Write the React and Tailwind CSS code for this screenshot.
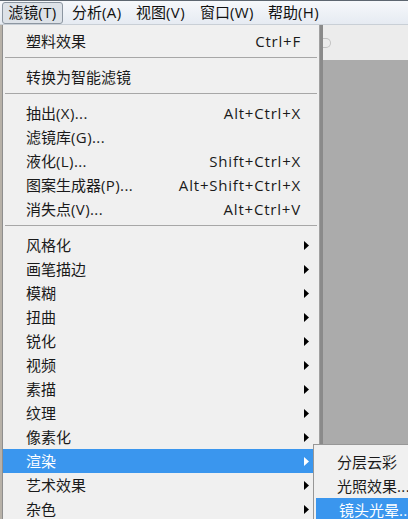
import React from 'react';

const font = { fontFamily: '"Segoe UI", "Open Sans", "Noto Sans CJK SC", sans-serif' };

const topMenus = [
  { label: '分析(A)', w: 'w-[64px]' },
  { label: '视图(V)', w: 'w-[64px]' },
  { label: '窗口(W)', w: 'w-[68px]' },
  { label: '帮助(H)', w: 'w-[64px]' },
];

const groups = [
  [{ label: '塑料效果', shortcut: 'Ctrl+F' }],
  [{ label: '转换为智能滤镜' }],
  [
    { label: '抽出(X)...', shortcut: 'Alt+Ctrl+X' },
    { label: '滤镜库(G)...' },
    { label: '液化(L)...', shortcut: 'Shift+Ctrl+X' },
    { label: '图案生成器(P)...', shortcut: 'Alt+Shift+Ctrl+X' },
    { label: '消失点(V)...', shortcut: 'Alt+Ctrl+V' },
  ],
  [
    { label: '风格化', sub: true },
    { label: '画笔描边', sub: true },
    { label: '模糊', sub: true },
    { label: '扭曲', sub: true },
    { label: '锐化', sub: true },
    { label: '视频', sub: true },
    { label: '素描', sub: true },
    { label: '纹理', sub: true },
    { label: '像素化', sub: true },
    { label: '渲染', sub: true, active: true },
    { label: '艺术效果', sub: true },
    { label: '杂色', sub: true },
  ],
];

// latin bits in the original are a bit wider than our fallback font
const Mixed = ({ text }) =>
  text.split(/([\x20-\x7e]+)/).map((part, i) =>
    /[\x20-\x7e]/.test(part) ? (
      <span key={i} className="tracking-[0.4px]">{part}</span>
    ) : (
      <span key={i}>{part}</span>
    )
  );

const Arrow = ({ color }) => (
  <svg width="5" height="9" viewBox="0 0 5 9" className="block">
    <path d="M0 0 L5 4.5 L0 9 Z" fill={color} />
  </svg>
);

const MenuRow = ({ item }) => (
  <div
    className={`flex items-center h-[24px] pl-[23px] ${
      item.active ? 'bg-[#3a96ee] text-white' : 'text-[#1a1a1a]'
    }`}
  >
    <span className="flex-1 whitespace-nowrap">
      <Mixed text={item.label} />
    </span>
    {item.shortcut && (
      <span className="whitespace-nowrap tracking-[0.8px]">{item.shortcut}</span>
    )}
    <span className="w-[18px] flex items-center pl-[3px]">
      {item.sub && <Arrow color={item.active ? '#ffffff' : '#000000'} />}
    </span>
  </div>
);

const App = () => {
  return (
    <div
      className="relative w-[408px] h-[519px] overflow-hidden bg-[#ababab] text-[15px]"
      style={font}
    >
      {/* menu bar */}
      <div className="h-[25px] flex items-center border-t border-[#5d6670] bg-gradient-to-b from-[#f6f8fb] to-[#e6ebf2] border-b border-b-[#c9cfd6]">
        <div className="ml-[2px] w-[61px] h-[22px] flex items-center justify-center rounded-[3px] border border-[#8c96a1] bg-[#dde2e8] text-[#111]">
          <Mixed text="滤镜(T)" />
        </div>
        {topMenus.map((m) => (
          <div key={m.label} className={`${m.w} shrink-0 pl-[9px] text-[#111] whitespace-nowrap`}>
            <Mixed text={m.label} />
          </div>
        ))}
      </div>

      <div className="flex h-[494px]">
        {/* dropdown */}
        <div className="w-[320px] flex shrink-0">
          <div className="w-[2px] bg-[#b7b1a8]" />
          <div className="flex-1 bg-[#f0f0f0] border-l border-[#8e8e8e] border-r border-r-[#a0a0a0] pt-[4px]">
            {groups.map((g, gi) => (
              <div key={gi}>
                {gi > 0 && (
                  <div className="h-[12px] pt-[4px] px-[2px]">
                    <div className="h-[1px] bg-[#a7a7a7]" />
                  </div>
                )}
                {g.map((item) => (
                  <MenuRow key={item.label} item={item} />
                ))}
              </div>
            ))}
          </div>
        </div>

        {/* workspace to the right */}
        <div className="flex-1 flex flex-col">
          <div className="h-[35px] bg-[#ececec] border-l-[3px] border-[#8a8a8a] flex items-center">
            <div className="w-[8px] h-[10px] rounded-r-full border border-l-0 border-[#c2c2c2]" />
          </div>
          <div className="flex-1 bg-[#ababab] border-l-[3px] border-[#8a8a8a]" />
        </div>
      </div>

      {/* submenu */}
      <div className="absolute left-[313px] top-[444px] w-[100px] h-[80px] bg-[#f0f0f0] border border-[#979797] pt-[5px]">
        <div className="h-[24px] flex items-center pl-[23px] text-[#1a1a1a] whitespace-nowrap">分层云彩</div>
        <div className="h-[24px] flex items-center pl-[23px] text-[#1a1a1a] whitespace-nowrap">
          <Mixed text="光照效果..." />
        </div>
        <div className="h-[24px] flex items-center pl-[23px] ml-[2px] bg-[#3a96ee] text-white whitespace-nowrap">
          <Mixed text="镜头光晕..." />
        </div>
      </div>
    </div>
  );
};

export default App;
